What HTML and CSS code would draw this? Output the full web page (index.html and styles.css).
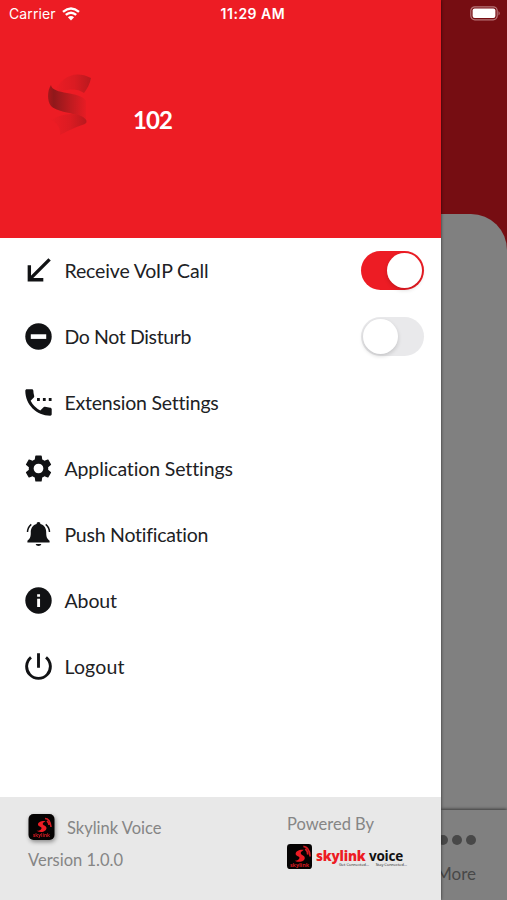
FILE: index.html
```html
<!DOCTYPE html>
<html lang="en">
<head>
<meta charset="utf-8">
<title>Skylink Voice</title>
<link rel="stylesheet" href="styles.css">
</head>
<body>
<div class="screen">
  <aside class="drawer">
    <header class="profile">
      <svg class="ribbon" width="46" height="64" viewBox="0 0 46 64">
        <defs>
          <linearGradient id="g1" x1="0" x2="1"><stop offset="0" stop-color="#9e171a"/><stop offset=".15" stop-color="#80181a"/><stop offset=".6" stop-color="#b81b20"/><stop offset="1" stop-color="#e61c24"/></linearGradient>
          <linearGradient id="g2" x1="0" x2="1"><stop offset="0" stop-color="#ed1c24"/><stop offset=".55" stop-color="#d81b22"/><stop offset="1" stop-color="#b0191e"/></linearGradient>
        </defs>
        <path d="M8 22C14 7 28 -2 45 7C44 13 41 18 38 22C29 15 16 20 8 22Z" fill="url(#g2)"/>
        <path d="M5 14C6 24 35 20 40 30L40 50C30 40 14 43 5 35C1 30 1 20 5 14Z" fill="url(#g1)"/>
        <path d="M5 49C16 42 29 41 37 46Q43 50 39 53C29 56 22 60 14 64C15 57 11 52 5 49Z" fill="url(#g2)"/>
      </svg>
      <span class="extension">102</span>
    </header>
    <nav class="menu">
      <div class="item">
        <svg class="icon" viewBox="0 0 28 28"><path d="M25.500 2.500L4.500 23.500M4.500 8.500V23.600H19" fill="none" stroke="#111214" stroke-width="3.500"/></svg>
        <span class="label receive">Receive VoIP Call</span>
        <span class="switch on"><i></i></span>
      </div>
      <div class="item">
        <svg class="icon" viewBox="0 0 28 28"><circle cx="14" cy="14" r="13.700"/><rect x="6" y="11.700" width="16" height="4.800" fill="#fff"/></svg>
        <span class="label dnd">Do Not Disturb</span>
        <span class="switch"><i></i></span>
      </div>
      <div class="item">
        <svg class="icon" viewBox="2.800 2.800 18.400 18.400"><path d="M20 15.500c-1.250 0-2.450-.2-3.570-.57a1 1 0 0 0-1.020.24l-2.200 2.200a15.050 15.050 0 0 1-6.590-6.580l2.200-2.210c.28-.27.36-.66.250-1.010A11.360 11.360 0 0 1 8.500 4c0-.55-.45-1-1-1H4c-.55 0-1 .45-1 1 0 9.390 7.610 17 17 17 .55 0 1-.45 1-1v-3.500c0-.55-.45-1-1-1z"/><path d="M11 9h1.900v1.900H11zM15 9h1.900v1.900H15zM19 9h1.900v1.900H19z"/></svg>
        <span class="label ext">Extension Settings</span>
      </div>
      <div class="item">
        <svg class="icon" viewBox="2 2 20 20"><path d="M19.140 12.940c.04-.3.060-.61.060-.94s-.02-.64-.07-.94l2.030-1.580c.18-.14.230-.41.120-.61l-1.920-3.320c-.12-.22-.37-.29-.59-.22l-2.390.96c-.5-.38-1.030-.7-1.620-.94l-.36-2.540c-.04-.24-.24-.41-.48-.41h-3.840c-.24 0-.43.170-.47.410l-.36 2.540c-.59.240-1.130.57-1.620.94l-2.390-.96c-.22-.08-.47 0-.59.220L2.740 8.870c-.12.210-.08.470.120.610l2.030 1.580c-.05.300-.09.630-.09.940s.02.640.07.940l-2.030 1.580c-.18.140-.23.410-.12.610l1.920 3.320c.12.220.37.290.59.220l2.390-.96c.5.380 1.030.7 1.620.94l.36 2.540c.05.240.24.410.48.410h3.840c.24 0 .44-.17.470-.41l.36-2.540c.59-.24 1.130-.56 1.620-.94l2.390.96c.22.080.47 0 .59-.22l1.920-3.320c.12-.22.070-.47-.12-.61l-2.010-1.580zM12 15.600A3.600 3.600 0 1 1 12 8.400a3.600 3.600 0 0 1 0 7.200z"/></svg>
        <span class="label app">Application Settings</span>
      </div>
      <div class="item">
        <svg class="icon" viewBox="0 0 28 28"><path d="M14 1a2 2 0 0 1 2 2.200C20.500 4.400 22 8 22 12C22 17 23 18.500 25.500 20.500V22.300H2.500V20.500C5 18.500 6 17 6 12C6 8 7.500 4.400 12 3.200A2 2 0 0 1 14 1ZM11 23.800H17Q16.500 26 14 26T11 23.800Z"/><path d="M6.500 3.500Q2.800 6.500 2.600 11.500M21.500 3.500Q25.200 6.500 25.400 11.500" fill="none" stroke="#111214" stroke-width="1.500"/></svg>
        <span class="label push">Push Notification</span>
      </div>
      <div class="item">
        <svg class="icon" viewBox="0 0 28 28"><circle cx="14" cy="14" r="13.700"/><path d="M12.600 7.500h3v2.700h-3zM12.600 12.300h3v8.400h-3z" fill="#fff"/></svg>
        <span class="label about">About</span>
      </div>
      <div class="item">
        <svg class="icon" viewBox="0 0 28 28"><path d="M6.200 4.500A12.300 12.300 0 1 0 21.800 4.500M14 .2V15.300" fill="none" stroke="#111214" stroke-width="3"/></svg>
        <span class="label logout">Logout</span>
      </div>
    </nav>
    <footer class="footer">
      <div class="product">
        <div class="product-name">
          <svg class="app-icon" viewBox="0 0 26 26">
            <rect width="26" height="26" rx="5" fill="#050303"/>
            <path d="M17 7C13 6.500 9.500 8 9.500 10.500C9.500 12.800 13.500 12.500 13 14.500C12.500 16 10.500 17 8 16.800C13 19.300 18 17.500 18 14C18 11.500 14 11.500 14.300 9.500C14.600 8.500 16 8 17 7Z" fill="#ed1c24"/>
            <path d="M16.500 4.500Q21.500 4.500 22.500 13M18.500 7Q20.500 9 20.500 11" fill="none" stroke="#d61b22" stroke-width="1.600"/>
            <text x="13" y="22.800" text-anchor="middle" class="logo-word">skylink</text>
          </svg>
          <span>Skylink Voice</span>
        </div>
        <div class="version">Version 1.0.0</div>
      </div>
      <div class="powered">
        <div class="powered-title">Powered By</div>
        <div class="brand">
          <svg class="brand-icon" viewBox="0 0 26 26">
            <rect width="26" height="26" rx="3.500" fill="#050303"/>
            <path d="M17.500 6C12.500 5.500 9 7.500 9 10.300C9 12.800 13.500 12.500 13 14.500C12.500 16.300 10.500 17.500 8 17.300C13 20 18.500 18 18.500 14.500C18.500 11.500 14 11.500 14.300 9C14.600 7.800 16.500 7.200 17.500 6Z" fill="#ed1c24"/>
            <path d="M17 2.500Q23.500 3 24 13M19 5Q22 8 21.500 11" fill="none" stroke="#d61b22" stroke-width="1.700"/>
            <text x="13" y="24" text-anchor="middle" class="logo-word large">skylink</text>
          </svg>
          <div class="brand-text">
            <div class="wordmark"><b>skylink</b> voice</div>
            <div class="tagline"><span>Get Connected...</span><span>Stay Connected...</span></div>
          </div>
        </div>
      </div>
    </footer>
  </aside>
  <main class="backdrop">
    <div class="page"></div>
    <div class="tab">
      <div class="dots"><i></i><i></i><i></i></div>
      <div class="tab-label">More</div>
    </div>
  </main>
  <div class="status">
    <span class="carrier">Carrier</span>
    <svg class="wifi" viewBox="0 0 18 14"><path d="M1 4.800Q9-2 17 4.800M3.800 7.900Q9 3.400 14.200 7.900" fill="none" stroke="#fff" stroke-width="2.400"/><path d="M5.900 10.300Q9 7.800 12.100 10.300L9 13.500Z" fill="#fff"/></svg>
    <span class="time">11:29 AM</span>
    <svg class="battery" viewBox="0 0 31 15"><rect x=".8" y=".8" width="26.400" height="13" rx="4" fill="none" stroke="#b77578" stroke-width="1.200"/><rect x="2.600" y="2.600" width="22.800" height="9.400" rx="2" fill="#fff"/><path d="M28.500 5Q31 7.300 28.500 9.600Z" fill="#b77578"/></svg>
  </div>
</div>
</body>
</html>
```

FILE: styles.css
```css
* { box-sizing: border-box; }
body { margin: 0; background: #808080; font-family: Lato, "Open Sans", sans-serif; color: #202124; }
.logo-word { font: bold 4.800px "Open Sans", sans-serif; fill: #d61b22; }
.logo-word.large { font-size: 5.600px; }
.screen { position: relative; display: flex; width: 507px; height: 900px; overflow: hidden; }
.drawer { position: relative; z-index: 1; display: flex; flex-direction: column; width: 441px; background: #fff; box-shadow: 0 0 3px rgba(0, 0, 0, .65); }
.profile { display: flex; height: 237.500px; padding: 71px 0 0 46px; background: #ed1c24; }
.ribbon { flex: none; opacity: .85; filter: blur(.4px); }
.extension { margin: 33px 0 0 41px; font: bold 24px/32px Lato, sans-serif; color: #fff; letter-spacing: -.9px; }
.menu { flex: 1; }
.item { display: flex; align-items: center; height: 66px; padding: 0 17px 0 25px; }
.icon { width: 27px; height: 27px; flex: none; fill: #111214; }
.label { margin-left: 12.500px; font-size: 19.500px; line-height: 26px; white-space: nowrap; font-variant-ligatures: none; }
.receive { letter-spacing: -.15px; }
.dnd { letter-spacing: -.38px; }
.ext { letter-spacing: -.22px; }
.app { letter-spacing: -.12px; }
.push { letter-spacing: -.25px; }
.about { letter-spacing: -.1px; }
.logout { letter-spacing: .15px; }
.switch { width: 63px; height: 39px; margin-left: auto; padding: 2px; border-radius: 20px; background: #e9e9eb; display: flex; }
.switch i { width: 35px; height: 35px; border-radius: 50%; background: #fff; box-shadow: 0 2px 4px rgba(0, 0, 0, .16); }
.switch.on { background: #ed1c24; justify-content: flex-end; }
.footer { display: flex; height: 103px; background: #e8e8e8; color: #858585; font-size: 16.500px; }
.product { width: 259px; margin-left: 28px; padding-top: 16px; }
.product-name { display: flex; align-items: center; gap: 12px; height: 28px; }
.product-name span { padding-top: 2px; }
.app-icon { width: 27px; height: 26px; filter: drop-shadow(1px 2px 2px rgba(0, 0, 0, .4)); }
.version { margin-top: 8px; line-height: 22px; }
.powered { padding-top: 16px; }
.powered-title { line-height: 22px; }
.brand { display: flex; margin-top: 9px; gap: 4px; }
.brand-icon { width: 25px; height: 25px; }
.brand-text { width: 91px; }
.wordmark { font: bold 13.500px/14px "Open Sans", sans-serif; letter-spacing: -.18px; color: #111; margin-top: 5px; height: 14px; white-space: nowrap; }
.wordmark b { color: #ed1c24; }
.tagline { display: flex; justify-content: space-between; padding-left: 23px; font: 3.900px/4px "Open Sans", sans-serif; color: #222; white-space: nowrap; }
.backdrop { display: flex; flex-direction: column; width: 66px; background: #760d12; }
.page { height: 597px; margin-top: 213.500px; background: #808080; border-radius: 0 36px 0 0; }
.tab { height: 90px; padding: 25px 31px 0 0; display: flex; flex-direction: column; align-items: flex-end; background: #808080; box-shadow: 0 -1px 3px rgba(0, 0, 0, .55); }
.dots { display: flex; gap: 4px; }
.dots i { width: 10px; height: 10px; border-radius: 50%; background: #484848; }
.tab-label { margin-top: 18px; font-size: 17px; line-height: 22px; color: #484848; }
.status { position: absolute; z-index: 2; inset: 0 0 auto 0; display: flex; align-items: center; height: 27px; padding-left: 9px; font: 14px/18px Inter, sans-serif; color: #fff; }
.wifi { width: 18px; height: 14px; margin-left: 6px; }
.time { margin-left: 141px; font-weight: 600; font-size: 14px; letter-spacing: .5px; }
.carrier { letter-spacing: .1px; }
.battery { width: 31px; height: 15px; margin-left: auto; margin-right: 6px; }
```
